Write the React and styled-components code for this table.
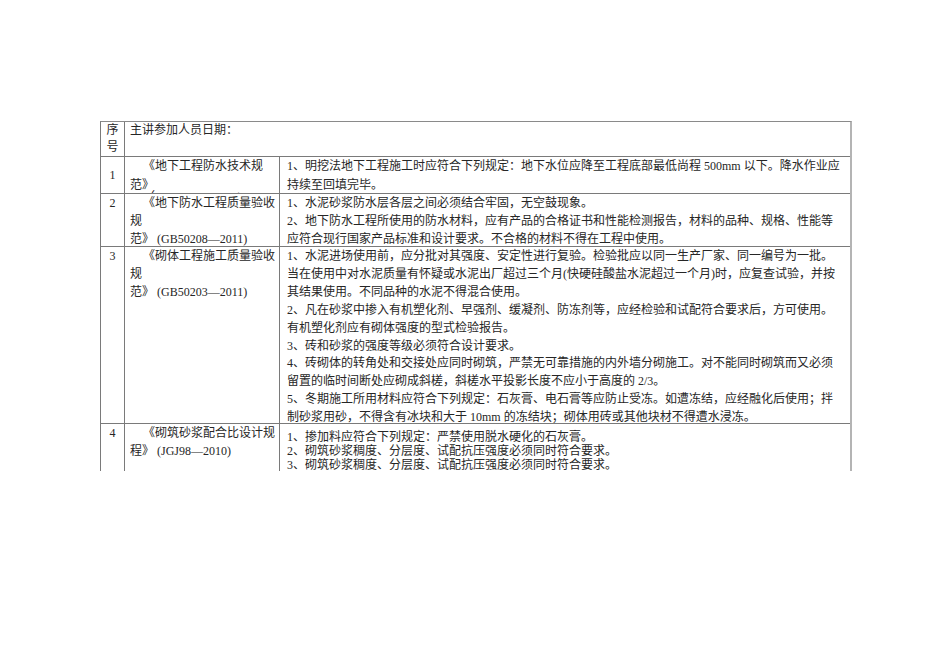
import React from "react";
import styled, { createGlobalStyle } from "styled-components";

const GlobalStyle = createGlobalStyle`
  html, body {
    margin: 0;
    padding: 0;
    background: #ffffff;
  }
  body {
    font-family: "Liberation Serif", "Noto Sans CJK SC", serif;
    color: #262626;
  }
`;

const rows = [
  {
    no: "1",
    height: 37,
    noAlign: "center",
    specLh: 18.5,
    spec: [
      { text: "《地下工程防水技术规", indent: true },
      { text: "范》" },
      // only the top of this line shows above the next row, as in the source
      { text: "（GB50108—2008)", indent: true, pull: 6 },
    ],
    textLh: 18.5,
    textTop: 0,
    lines: [
      "1、明挖法地下工程施工时应符合下列规定：地下水位应降至工程底部最低尚程 500mm 以下。降水作业应",
      "持续至回填完毕。",
    ],
  },
  {
    no: "2",
    height: 53,
    specLh: 18,
    spec: [
      { text: "《地下防水工程质量验收", indent: true },
      { text: "规" },
      { text: "范》 (GB50208—2011)" },
    ],
    textLh: 18,
    textTop: 0,
    lines: [
      "1、水泥砂浆防水层各层之间必须结合牢固，无空鼓现象。",
      "2、地下防水工程所使用的防水材料，应有产品的合格证书和性能检测报告，材料的品种、规格、性能等",
      "应符合现行国家产品标准和设计要求。不合格的材料不得在工程中使用。",
    ],
  },
  {
    no: "3",
    height: 177,
    specLh: 18,
    spec: [
      { text: "《砌体工程施工质量验收", indent: true },
      { text: "规" },
      { text: "范》 (GB50203—2011)" },
    ],
    textLh: 17.9,
    textTop: 1,
    lines: [
      "1、水泥进场使用前，应分批对其强度、安定性进行复验。检验批应以同一生产厂家、同一编号为一批。",
      "当在使用中对水泥质量有怀疑或水泥出厂超过三个月(快硬硅酸盐水泥超过一个月)时，应复查试验，并按",
      "其结果使用。不同品种的水泥不得混合使用。",
      "2、凡在砂浆中掺入有机塑化剂、早强剂、缓凝剂、防冻剂等，应经检验和试配符合要求后，方可使用。",
      "有机塑化剂应有砌体强度的型式检验报告。",
      "3、砖和砂浆的强度等级必须符合设计要求。",
      "4、砖砌体的转角处和交接处应同时砌筑，严禁无可靠措施的内外墙分砌施工。对不能同时砌筑而又必须",
      "留置的临时间断处应砌成斜槎，斜槎水平投影长度不应小于高度的 2/3。",
      "5、冬期施工所用材料应符合下列规定：石灰膏、电石膏等应防止受冻。如遭冻结，应经融化后使用；拌",
      "制砂浆用砂，不得含有冰块和大于 10mm 的冻结块；砌体用砖或其他块材不得遭水浸冻。",
    ],
  },
  {
    no: "4",
    height: 47,
    last: true,
    specLh: 18,
    spec: [
      { text: "《砌筑砂浆配合比设计规", indent: true },
      { text: "程》 (JGJ98—2010)" },
    ],
    textLh: 14,
    textTop: 6,
    lines: [
      "1、掺加料应符合下列规定：严禁使用脱水硬化的石灰膏。",
      "2、砌筑砂浆稠度、分层度、试配抗压强度必须同时符合要求。",
      "3、砌筑砂浆稠度、分层度、试配抗压强度必须同时符合要求。",
    ],
  },
];

export default function App() {
  return (
    <Page>
      <GlobalStyle />
      <Sheet>
        <HeadRow>
          <NoCell $lh={17}>
            <div>序</div>
            <div>号</div>
          </NoCell>
          <HeadCell>主讲参加人员日期：</HeadCell>
        </HeadRow>
        {rows.map((row) => (
          <Row key={row.no} $height={row.height} $last={row.last}>
            <NoCell $lh={18} $align={row.noAlign}>
              {row.no}
            </NoCell>
            <SpecCell $lh={row.specLh}>
              {row.spec.map((l, i) => (
                <Line key={i} $indent={l.indent} $pull={l.pull}>
                  {l.text}
                </Line>
              ))}
            </SpecCell>
            <TextCell $lh={row.textLh} $top={row.textTop}>
              {row.lines.map((l, i) => (
                <Line key={i}>{l}</Line>
              ))}
            </TextCell>
          </Row>
        ))}
      </Sheet>
    </Page>
  );
}

const Page = styled.div`
  width: 950px;
  height: 672px;
  padding: 121px 0 0 100px;
  box-sizing: border-box;
  overflow: hidden;
`;

const Sheet = styled.div`
  width: 752px;
  border-top: 1px solid #8a8a8a;
  border-left: 1px solid #7a7a7a;
  border-right: 2px solid #b4b4b4;
  box-sizing: border-box;
  font-size: 12px;
`;

const HeadRow = styled.div`
  display: grid;
  grid-template-columns: 23px 1fr;
  height: 35px;
  border-bottom: 1px solid #7a7a7a;
  box-sizing: border-box;
`;

const Row = styled.div`
  display: grid;
  grid-template-columns: 23px 155px 1fr;
  height: ${(p) => p.$height}px;
  border-bottom: ${(p) => (p.$last ? "none" : "1px solid #7a7a7a")};
  box-sizing: border-box;
`;

const NoCell = styled.div`
  display: flex;
  flex-direction: column;
  align-items: center;
  justify-content: ${(p) => (p.$align === "center" ? "center" : "flex-start")};
  line-height: ${(p) => p.$lh}px;
  overflow: hidden;
`;

const HeadCell = styled.div`
  border-left: 1px solid #7a7a7a;
  padding-left: 5px;
  line-height: 17px;
  white-space: nowrap;
`;

const SpecCell = styled.div`
  border-left: 1px solid #7a7a7a;
  padding-left: 5px;
  line-height: ${(p) => p.$lh}px;
  overflow: hidden;
`;

const TextCell = styled.div`
  border-left: 1px solid #7a7a7a;
  padding: ${(p) => p.$top}px 0 0 7px;
  line-height: ${(p) => p.$lh}px;
  overflow: hidden;
`;

const Line = styled.div`
  white-space: nowrap;
  padding-left: ${(p) => (p.$indent ? "13px" : "0")};
  margin-top: ${(p) => (p.$pull ? `-${p.$pull}px` : "0")};
`;
